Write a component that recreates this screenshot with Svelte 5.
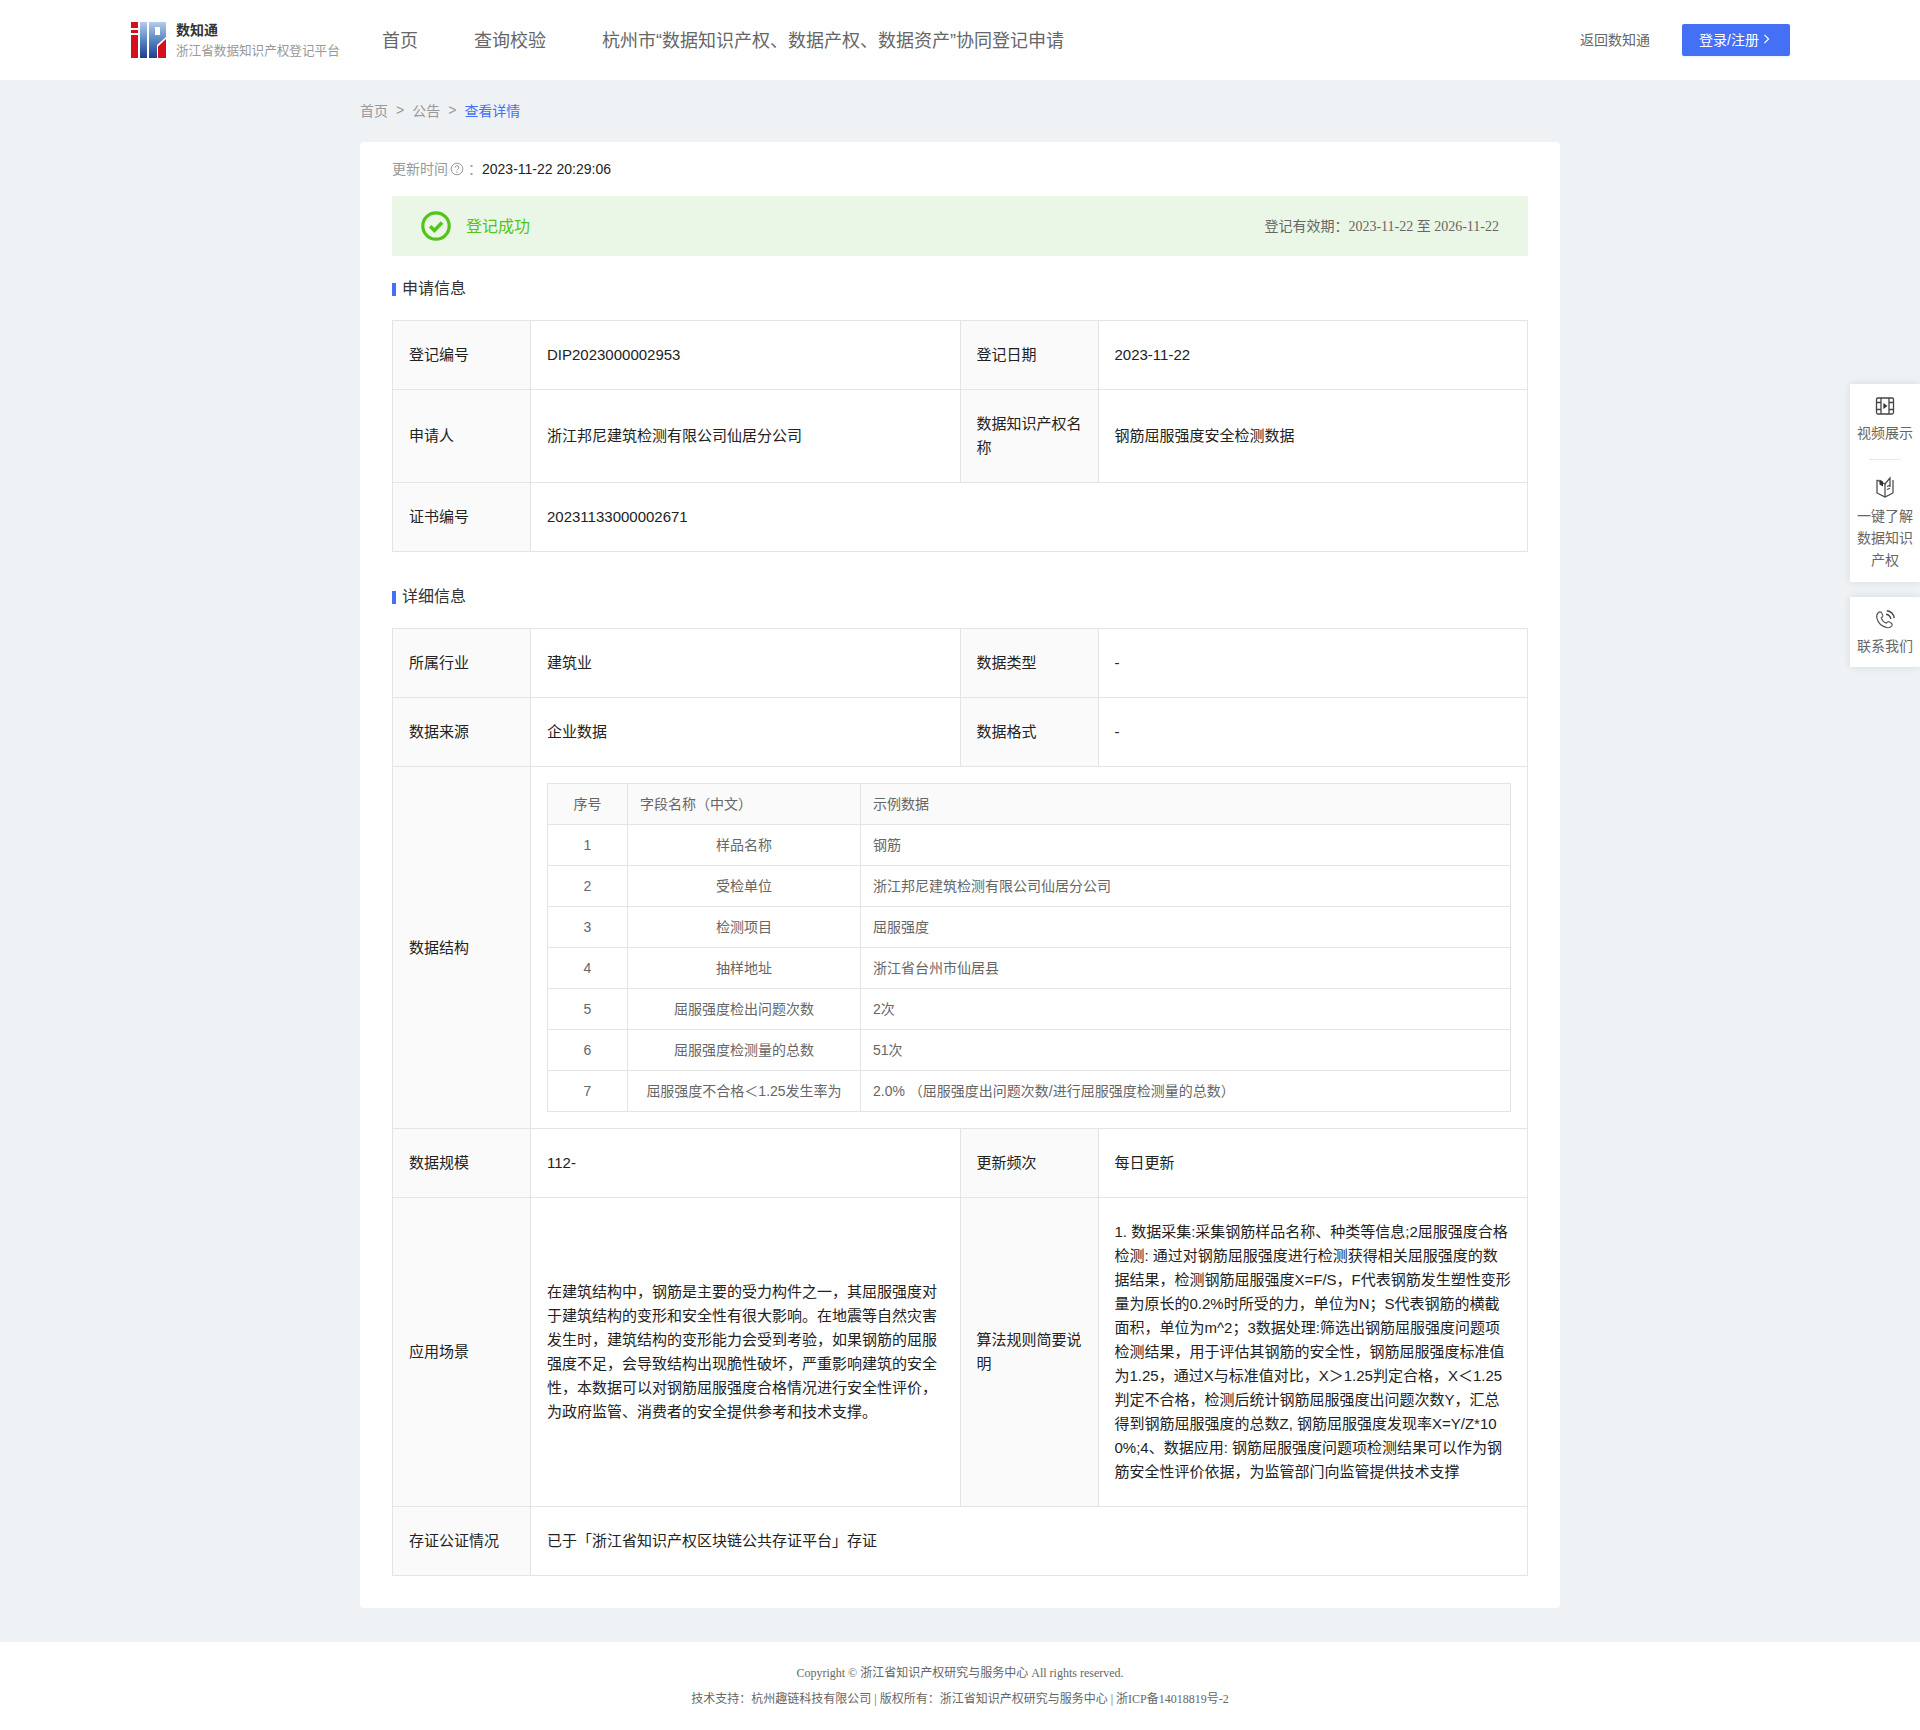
<script>
  const basicInfo = [
    { label: "登记编号", value: "DIP2023000002953", label2: "登记日期", value2: "2023-11-22" },
    { label: "申请人", value: "浙江邦尼建筑检测有限公司仙居分公司", label2: "数据知识产权名称", value2: "钢筋屈服强度安全检测数据" },
    { label: "证书编号", value: "20231133000002671" }
  ];

  const fields = [
    ["样品名称", "钢筋"],
    ["受检单位", "浙江邦尼建筑检测有限公司仙居分公司"],
    ["检测项目", "屈服强度"],
    ["抽样地址", "浙江省台州市仙居县"],
    ["屈服强度检出问题次数", "2次"],
    ["屈服强度检测量的总数", "51次"],
    ["屈服强度不合格＜1.25发生率为", "2.0% （屈服强度出问题次数/进行屈服强度检测量的总数）"]
  ];

  const scene = "在建筑结构中，钢筋是主要的受力构件之一，其屈服强度对于建筑结构的变形和安全性有很大影响。在地震等自然灾害发生时，建筑结构的变形能力会受到考验，如果钢筋的屈服强度不足，会导致结构出现脆性破坏，严重影响建筑的安全性，本数据可以对钢筋屈服强度合格情况进行安全性评价，为政府监管、消费者的安全提供参考和技术支撑。";

  const rule = "1. 数据采集:采集钢筋样品名称、种类等信息;2屈服强度合格检测: 通过对钢筋屈服强度进行检测获得相关屈服强度的数据结果，检测钢筋屈服强度X=F/S，F代表钢筋发生塑性变形量为原长的0.2%时所受的力，单位为N；S代表钢筋的横截面积，单位为m^2；3数据处理:筛选出钢筋屈服强度问题项检测结果，用于评估其钢筋的安全性，钢筋屈服强度标准值为1.25，通过X与标准值对比，X＞1.25判定合格，X＜1.25判定不合格，检测后统计钢筋屈服强度出问题次数Y，汇总得到钢筋屈服强度的总数Z, 钢筋屈服强度发现率X=Y/Z*100%;4、数据应用: 钢筋屈服强度问题项检测结果可以作为钢筋安全性评价依据，为监管部门向监管提供技术支撑";
</script>

<header class="header">
  <div class="brand">
    <svg class="logo" viewBox="0 0 35 36" width="35" height="36">
      <defs>
        <linearGradient id="blue" x1="0" y1="0" x2="0" y2="1">
          <stop offset="0" stop-color="#b4cdea" />
          <stop offset="0.5" stop-color="#5a86c2" />
          <stop offset="1" stop-color="#1d3f8f" />
        </linearGradient>
      </defs>
      <rect x="0" y="0" width="7" height="6" fill="#d4101c" />
      <rect x="0" y="8" width="7" height="3" fill="#d4101c" />
      <rect x="0" y="13" width="7" height="23" fill="#d4101c" />
      <rect x="9" y="0" width="7" height="36" fill="url(#blue)" />
      <path d="M18 0h17v15l-9 8v13h-8z" fill="url(#blue)" />
      <rect x="24" y="5" width="5" height="8" fill="#fff" />
      <polygon points="27,36 27,24.500 35,17 35,36" fill="#d4101c" />
    </svg>
    <div class="brand-text">
      <strong>数知通</strong>
      <span>浙江省数据知识产权登记平台</span>
    </div>
  </div>
  <nav class="nav">
    <span>首页</span>
    <span>查询校验</span>
    <span>杭州市“数据知识产权、数据产权、数据资产”协同登记申请</span>
  </nav>
  <div class="header-right">
    <span class="back">返回数知通</span>
    <button class="login">登录/注册
      <svg viewBox="0 0 8 12" width="7" height="10"><path d="M1.500 1l5 5-5 5" fill="none" stroke="#fff" stroke-width="1.400" /></svg>
    </button>
  </div>
</header>

<main class="main">
  <div class="crumbs">
    <span>首页</span><i>&gt;</i><span>公告</span><i>&gt;</i><span class="current">查看详情</span>
  </div>

  <section class="card">
    <div class="updated">
      <span class="muted">更新时间</span>
      <svg viewBox="0 0 14 14" width="14" height="14">
        <circle cx="7" cy="7" r="5.800" fill="none" stroke="#999" />
        <path d="M5.200 5.600a1.800 1.800 0 1 1 2.700 1.500c-.6.400-.9.700-.9 1.300" fill="none" stroke="#999" />
        <circle cx="7" cy="10.200" r=".7" fill="#999" />
      </svg>
      <span class="muted colon">：</span>
      <span class="date">2023-11-22 20:29:06</span>
    </div>

    <div class="banner">
      <div class="status">
        <svg viewBox="0 0 30 30" width="30" height="30">
          <circle cx="15" cy="15" r="13.200" fill="none" stroke="#52c41a" stroke-width="3.200" />
          <path d="M9.200 15.200l4.200 4.200 7.600-7.800" fill="none" stroke="#52c41a" stroke-width="3.600" />
        </svg>
        <span class="status-text">登记成功</span>
      </div>
      <div class="period">登记有效期：2023-11-22 至 2026-11-22</div>
    </div>

    <h3 class="title">申请信息</h3>
    <table class="info">
      <colgroup><col class="c1" /><col /><col class="c1" /><col /></colgroup>
      <tbody>
        {#each basicInfo as row}
          <tr>
            <th>{row.label}</th>
            {#if row.label2}
              <td>{row.value}</td>
              <th>{row.label2}</th>
              <td>{row.value2}</td>
            {:else}
              <td colspan="3">{row.value}</td>
            {/if}
          </tr>
        {/each}
      </tbody>
    </table>

    <h3 class="title second">详细信息</h3>
    <table class="info">
      <colgroup><col class="c1" /><col /><col class="c1" /><col /></colgroup>
      <tbody>
        <tr><th>所属行业</th><td>建筑业</td><th>数据类型</th><td>-</td></tr>
        <tr><th>数据来源</th><td>企业数据</td><th>数据格式</th><td>-</td></tr>
        <tr>
          <th>数据结构</th>
          <td colspan="3" class="nested-cell">
            <table class="fields">
              <colgroup><col class="f1" /><col class="f2" /><col /></colgroup>
              <thead>
                <tr><th class="center">序号</th><th>字段名称（中文）</th><th>示例数据</th></tr>
              </thead>
              <tbody>
                {#each fields as f, i}
                  <tr>
                    <td class="center">{i + 1}</td>
                    <td class="center">{f[0]}</td>
                    <td>{f[1]}</td>
                  </tr>
                {/each}
              </tbody>
            </table>
          </td>
        </tr>
        <tr><th>数据规模</th><td>112-</td><th>更新频次</th><td>每日更新</td></tr>
        <tr><th>应用场景</th><td>{scene}</td><th>算法规则简要说明</th><td>{rule}</td></tr>
        <tr><th>存证公证情况</th><td colspan="3">已于「浙江省知识产权区块链公共存证平台」存证</td></tr>
      </tbody>
    </table>
  </section>
</main>

<footer class="footer">
  <p>Copyright © 浙江省知识产权研究与服务中心 All rights reserved.</p>
  <p>技术支持：杭州趣链科技有限公司 | 版权所有：浙江省知识产权研究与服务中心 | 浙ICP备14018819号-2</p>
</footer>

<aside class="side">
  <div class="side-card">
    <div class="side-item">
      <svg viewBox="0 0 20 20" width="20" height="20">
        <rect x="1.500" y="2" width="17" height="16" rx="1.500" fill="none" stroke="#444" stroke-width="1.300" />
        <path d="M6 2v16M14 2v16M1.500 6.500H6M1.500 13.500H6M14 6.500h4.500M14 13.500h4.500" fill="none" stroke="#444" stroke-width="1.300" />
        <path d="M8.400 7l4 3-4 3z" fill="#333" />
      </svg>
      <span>视频展示</span>
    </div>
    <div class="side-line"></div>
    <div class="side-item book">
      <svg viewBox="0 0 22 22" width="22" height="22">
        <path d="M3 4v13l8 4 8-4V4M3 4l8 4 5-6v9" fill="none" stroke="#444" stroke-width="1.200" />
        <path d="M11 8v13" fill="none" stroke="#444" stroke-width="1.200" />
        <path d="M5.500 3.500l3.500 2v5l-3.500-2z" fill="#333" />
        <path d="M13 10.500l3-1.200M13 13.500l3-1.200" fill="none" stroke="#444" stroke-width="1.200" />
      </svg>
      <span>一键了解数据知识产权</span>
    </div>
  </div>
  <div class="side-card contact">
    <div class="side-item">
      <svg viewBox="0 0 22 22" width="22" height="22">
        <path d="M4.500 3.500c1.200-1 2.400-.8 3 .3l1.200 2.200c.4.800.2 1.500-.5 2l-1 .8c.8 2.400 2.700 4.400 5.200 5.400l.9-1c.6-.7 1.400-.8 2.100-.3l2 1.400c1 .7 1.100 1.900.2 2.900-1.300 1.500-3.100 1.900-5.200 1.200C7.500 17.200 3.900 13.300 2.800 9 2.300 6.800 3 4.800 4.500 3.500z" fill="none" stroke="#555" stroke-width="1.100" />
        <path d="M12 5.200c2.500.3 4.400 2.200 4.800 4.800M12.800 1.800c3.800.5 6.800 3.400 7.400 7.300" fill="none" stroke="#444" stroke-width="1.400" />
      </svg>
      <span>联系我们</span>
    </div>
  </div>
</aside>

<style>
  :global(body) {
    margin: 0;
    background: #eef2f5;
    font-family: "Liberation Sans", "Noto Sans CJK SC", sans-serif;
    color: #333;
  }

  .header {
    height: 80px;
    padding: 0 130px;
    background: #fff;
    display: flex;
    align-items: center;
  }

  .brand {
    display: flex;
    align-items: center;
    gap: 10px;
    width: 252px;
    flex-shrink: 0;
  }

  .logo {
    margin-left: 1px;
  }

  .brand-text {
    display: flex;
    flex-direction: column;
    gap: 3px;
  }

  .brand-text strong {
    font-size: 14px;
    line-height: 18px;
    color: #333;
  }

  .brand-text span {
    font-size: 12.600px;
    line-height: 18px;
    color: #999;
    white-space: nowrap;
  }

  .nav {
    display: flex;
    gap: 56px;
    padding-bottom: 2px;
    font-size: 18px;
    color: #666;
  }

  .header-right {
    margin-left: auto;
    display: flex;
    align-items: center;
    gap: 32px;
    font-size: 14px;
  }

  .back {
    color: #666;
    padding-bottom: 2px;
  }

  .login {
    width: 108px;
    height: 32px;
    padding: 0 3px 2px 0;
    border: 0;
    border-radius: 2px;
    background: #4470f5;
    color: #fff;
    font: inherit;
    box-shadow: 0 2px 0 rgba(0, 0, 0, 0.04);
    display: flex;
    align-items: center;
    justify-content: center;
    gap: 4px;
  }

  .main {
    width: 1200px;
    margin: 0 auto;
    padding-bottom: 34px;
  }

  .crumbs {
    height: 62px;
    padding-bottom: 2px;
    box-sizing: border-box;
    display: flex;
    align-items: center;
    font-size: 14px;
    color: #999;
  }

  .crumbs i {
    font-style: normal;
    margin: 0 8px;
  }

  .current {
    color: #4470f5;
  }

  .card {
    background: #fff;
    border-radius: 4px;
    padding: 18px 32px 32px;
  }

  .updated {
    display: flex;
    align-items: center;
    height: 18px;
    font-size: 14px;
    margin-bottom: 18px;
  }

  .updated svg {
    margin-left: 2px;
  }

  .muted {
    color: #999;
    position: relative;
    top: -1px;
  }

  .date {
    color: #222;
  }

  .colon {
    width: 14px;
    padding-left: 4px;
  }

  .banner {
    height: 60px;
    padding: 0 29px;
    background: #ebf7e6;
    display: flex;
    align-items: center;
    justify-content: space-between;
  }

  .status {
    display: flex;
    align-items: center;
    gap: 15px;
    font-size: 16px;
    color: #52c41a;
  }

  .status-text {
    padding-bottom: 2px;
  }

  .period {
    font-family: "Liberation Serif", "Noto Sans CJK SC", serif;
    font-size: 14px;
    padding-bottom: 2px;
    color: #666;
  }

  .title {
    margin: 22px 0 20px;
    padding-left: 10px;
    position: relative;
    font-size: 16px;
    line-height: 22px;
    font-weight: normal;
    color: #333;
  }

  .title::before {
    content: "";
    position: absolute;
    left: 0;
    top: 5px;
    width: 4px;
    height: 13px;
    background: #4470f5;
  }

  .title.second {
    margin-top: 34px;
  }

  .info {
    width: 100%;
    table-layout: fixed;
    border-collapse: collapse;
    font-size: 15px;
    line-height: 24px;
    color: #222;
  }

  .c1 {
    width: 138px;
  }

  .info > tbody > tr > th,
  .info > tbody > tr > td {
    border: 1px solid #e4e4e4;
    padding: 22px 16px;
    text-align: left;
    font-weight: normal;
    word-break: break-all;
  }

  .info > tbody > tr > th {
    background: #fafafa;
  }

  .info > tbody > tr > td.nested-cell {
    padding: 16px;
  }

  .fields {
    width: 100%;
    table-layout: fixed;
    border-collapse: collapse;
    font-size: 14px;
    line-height: 20px;
    color: #666;
  }

  .f1 {
    width: 80px;
  }

  .f2 {
    width: 233px;
  }

  .fields th,
  .fields td {
    height: 40px;
    padding: 0 12px;
    border: 1px solid #e4e4e4;
    text-align: left;
    font-weight: normal;
    box-sizing: content-box;
  }

  .fields th {
    background: #fafafa;
  }

  .fields .center {
    text-align: center;
  }

  .footer {
    margin: 0;
    height: 88px;
    padding-top: 18px;
    box-sizing: border-box;
    background: #fff;
    text-align: center;
    font-family: "Liberation Serif", "Noto Sans CJK SC", serif;
    font-size: 12px;
    line-height: 26px;
    color: #666;
  }

  .footer p {
    margin: 0;
  }

  .side {
    position: absolute;
    right: 0;
    top: 384px;
    width: 70px;
    display: flex;
    flex-direction: column;
    gap: 15px;
  }

  .side-card {
    background: #fff;
    box-shadow: 0 0 8px rgba(0, 0, 0, 0.1);
    padding: 12px 7px 11px;
    font-size: 14px;
    line-height: 22px;
    color: #666;
    text-align: center;
  }

  .side-card.contact {
    padding-bottom: 10px;
  }

  .side-item {
    display: flex;
    flex-direction: column;
    align-items: center;
    gap: 6px;
  }

  .side-item.book {
    gap: 7px;
  }

  .contact .side-item {
    gap: 4px;
  }

  .side-line {
    width: 32px;
    height: 1px;
    margin: 15px auto 16px;
    background: #e8e8e8;
  }
</style>
